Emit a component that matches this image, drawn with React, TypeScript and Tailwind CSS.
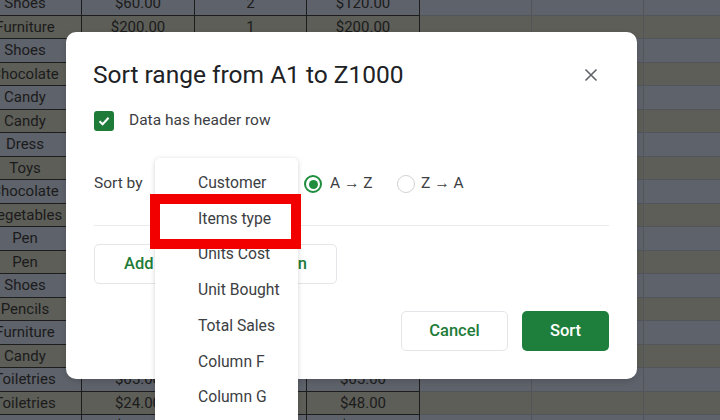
import React from "react";

type Row = { a: string; b?: string; c?: string; d?: string };

const rows: Row[] = [
  { a: "Shoes", b: "$60.00", c: "2", d: "$120.00" },
  { a: "Furniture", b: "$200.00", c: "1", d: "$200.00" },
  { a: "Shoes", b: "$45.00", c: "2", d: "$90.00" },
  { a: "Chocolate", b: "$5.00", c: "4", d: "$20.00" },
  { a: "Candy", b: "$2.00", c: "5", d: "$10.00" },
  { a: "Candy", b: "$2.00", c: "3", d: "$6.00" },
  { a: "Dress", b: "$80.00", c: "1", d: "$80.00" },
  { a: "Toys", b: "$30.00", c: "2", d: "$60.00" },
  { a: "Chocolate", b: "$5.00", c: "2", d: "$10.00" },
  { a: "Vegetables", b: "$12.00", c: "3", d: "$36.00" },
  { a: "Pen", b: "$1.00", c: "10", d: "$10.00" },
  { a: "Pen", b: "$1.00", c: "6", d: "$6.00" },
  { a: "Shoes", b: "$60.00", c: "1", d: "$60.00" },
  { a: "Pencils", b: "$0.50", c: "12", d: "$6.00" },
  { a: "Furniture", b: "$150.00", c: "1", d: "$150.00" },
  { a: "Candy", b: "$2.00", c: "4", d: "$8.00" },
  { a: "Toiletries", b: "$65.00", c: "1", d: "$65.00" },
  { a: "Toiletries", b: "$24.00", c: "2", d: "$48.00" },
  { a: "Dress", b: "$70.00", c: "1", d: "$70.00" },
];

const menu = ["Customer", "Items type", "Units Cost", "Unit Bought", "Total Sales", "Column F", "Column G", "Column H"];

function Sheet() {
  return (
    <div className="h-[420px] overflow-hidden font-['Roboto',sans-serif] text-[15px] text-[#1b1b1b]">
      <div className="mt-[-8px] flex flex-col">
        {rows.map((r, i) => (
          <div
            key={i}
            className={`flex h-[23.5px] shrink-0 ${i % 2 === 0 ? "bg-[#5e626a]" : "bg-[#5d5e58]"}`}
          >
            <div className="ml-[-31px] flex w-[113px] shrink-0 items-center justify-center border-r-[1.5px] border-b-[1.5px] border-[#1d1d1d]">
              {r.a}
            </div>
            <div className="flex w-[113px] shrink-0 items-center justify-center border-r-[1.5px] border-b-[1.5px] border-[#1d1d1d]">
              {r.b}
            </div>
            <div className="flex w-[112px] shrink-0 items-center justify-center border-r-[1.5px] border-b-[1.5px] border-[#1d1d1d]">
              {r.c}
            </div>
            <div className="flex w-[113px] shrink-0 items-center justify-center border-r-[1.5px] border-b-[1.5px] border-[#1d1d1d]">
              {r.d}
            </div>
            <div className="w-[112px] shrink-0 border-r border-b border-[#52555a]" />
            <div className="w-[112px] shrink-0 border-r border-b border-[#52555a]" />
            <div className="w-[112px] shrink-0 border-r border-b border-[#52555a]" />
          </div>
        ))}
      </div>
    </div>
  );
}

function Dialog() {
  return (
    <div className="absolute left-[66px] top-[32px] flex h-[347px] w-[571px] flex-col rounded-[10px] bg-white px-[28px] pt-[27px] font-['Roboto',sans-serif] shadow-[0_2px_6px_rgba(0,0,0,0.15)]">
      <div className="flex h-[32px] items-center justify-between">
        <h1 className="ml-[-1px] text-[24.5px] leading-[32px] text-[#202124]">Sort range from A1 to Z1000</h1>
        <svg width="14" height="14" viewBox="0 0 14 14" className="mr-[11px]">
          <path d="M1.5 1.5 L12.5 12.5 M12.5 1.5 L1.5 12.5" stroke="#5f6368" strokeWidth="1.6" />
        </svg>
      </div>

      <div className="mt-[20px] flex h-[20px] items-center">
        <div className="flex h-[20px] w-[20px] items-center justify-center rounded-[3px] bg-[#1e7b38]">
          <svg width="14" height="14" viewBox="0 0 14 14">
            <path d="M2.5 7.2 L5.6 10.2 L11.6 3.8" stroke="#fff" strokeWidth="2" fill="none" />
          </svg>
        </div>
        <span className="ml-[15px] text-[15.5px] text-[#3c4043]">Data has header row</span>
      </div>

      <div className="mt-[43px] flex h-[20px] items-center text-[15.5px] text-[#3c4043]">
        <span className="w-[210px]">Sort by</span>
        <span className="flex h-[18px] w-[18px] items-center justify-center rounded-full border-2 border-[#1e8e3e]">
          <span className="h-[9px] w-[9px] rounded-full bg-[#1e8e3e]" />
        </span>
        <span className="ml-[8px] w-[67px]">A → Z</span>
        <span className="h-[18px] w-[18px] rounded-full border border-[#d0d2d5]" />
        <span className="ml-[6px]">Z → A</span>
      </div>

      <div className="mt-[31px] h-px bg-[#e8eaed]" />

      <div className="mt-[18px] flex h-[40px] w-[243px] items-center justify-center rounded-[5px] border border-[#e3e5e8] text-[16.5px] font-medium text-[#1e7b38]">
        Add another sort column
      </div>

      <div className="mt-[27px] flex justify-end gap-[14px]">
        <div className="flex h-[40px] w-[107px] items-center justify-center rounded-[5px] border border-[#e3e5e8] text-[16.5px] font-medium text-[#1e7b38]">
          Cancel
        </div>
        <div className="flex h-[40px] w-[87px] items-center justify-center rounded-[5px] bg-[#1e7e3b] text-[16.5px] font-medium text-white">
          Sort
        </div>
      </div>
    </div>
  );
}

function Menu() {
  return (
    <div className="absolute left-[155px] top-[158px] h-[280px] w-[143px] rounded-[5px] bg-white pt-[7px] font-['Roboto',sans-serif] text-[15.7px] text-[#3c4043] shadow-[0_1px_5px_rgba(0,0,0,0.18)]">
      {menu.map((m) => (
        <div key={m} className="flex h-[35.7px] items-center pl-[43px]">
          {m}
        </div>
      ))}
    </div>
  );
}

export default function App() {
  return (
    <div className="relative h-[420px] w-[720px] overflow-hidden bg-[#5e626a]">
      <Sheet />
      <Dialog />
      <Menu />
      <div className="absolute left-[150px] top-[194px] h-[55px] w-[151px] border-[10px] border-[#f20000]" />
    </div>
  );
}
